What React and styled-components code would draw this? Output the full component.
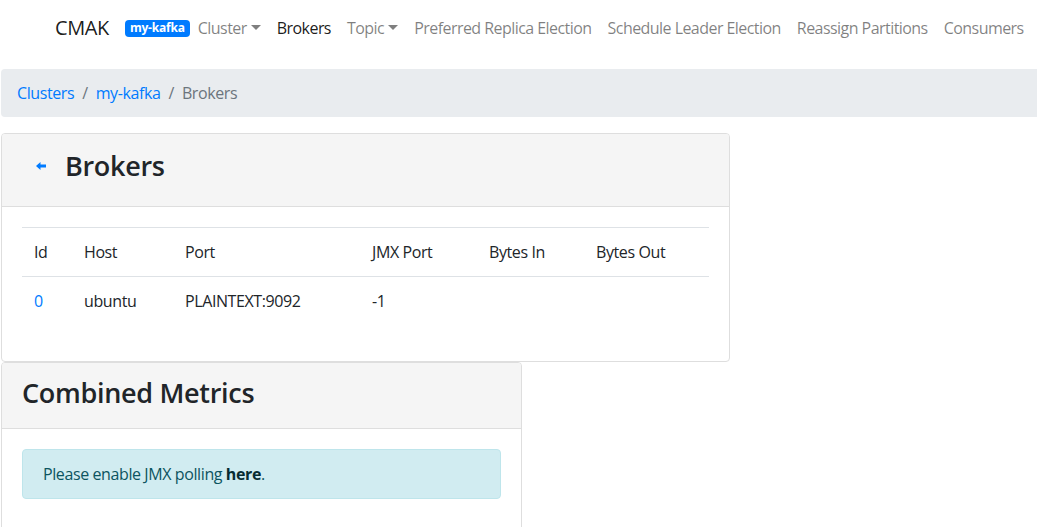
import React from "react";
import styled, { createGlobalStyle } from "styled-components";

const Global = createGlobalStyle`
  html, body { margin: 0; padding: 0; background: #fff; }
  body {
    font-family: "Open Sans", "Noto Sans", sans-serif;
    font-size: 16px;
    line-height: 1.5;
    letter-spacing: -0.4px;
    color: #212529;
  }
  * { box-sizing: border-box; }
`;

const Navbar = styled.nav`
  display: flex;
  align-items: center;
  height: 56px;
  padding: 0 0 0 55px;
  white-space: nowrap;
`;

const Brand = styled.a`
  font-size: 20px;
  line-height: 30px;
  color: rgba(0, 0, 0, 0.9);
  margin-right: 16px;
  text-decoration: none;
`;

const Badge = styled.span`
  display: inline-block;
  background: #007bff;
  color: #fff;
  font-size: 12px;
  font-weight: 700;
  line-height: 1;
  letter-spacing: -0.2px;
  padding: 2px 5px 3px;
  border-radius: 4px;
`;

const NavList = styled.ul`
  display: flex;
  list-style: none;
  margin: 0;
  padding: 0;
`;

const NavLink = styled.a`
  display: flex;
  align-items: center;
  padding: 8px 8px;
  letter-spacing: -0.55px;
  color: ${(p) => (p.$active ? "rgba(0,0,0,0.9)" : "rgba(0,0,0,0.5)")};
  text-decoration: none;
`;

const Caret = styled.span`
  display: inline-block;
  margin-left: 4px;
  border-top: 5px solid currentColor;
  border-left: 5px solid transparent;
  border-right: 5px solid transparent;
  transform: translateY(-1px);
`;

const Main = styled.main`
  padding: 13px 0 0 1px;
`;

const Breadcrumb = styled.ol`
  display: flex;
  list-style: none;
  margin: 0 0 16px;
  padding: 12px 16px;
  background: #e9ecef;
  border-radius: 4px 0 0 4px;
`;

const Crumb = styled.li`
  color: #6c757d;
  & + &::before {
    content: "/";
    padding: 0 8px;
    color: #6c757d;
  }
`;

const CrumbLink = styled.a`
  color: #007bff;
  text-decoration: none;
`;

const Card = styled.section`
  width: ${(p) => p.$width}px;
  border: 1px solid #dedede;
  border-radius: 4px;
  background: #fff;
  overflow: hidden;
`;

const CardHeader = styled.header`
  display: flex;
  align-items: flex-start;
  height: ${(p) => p.$height}px;
  padding: ${(p) => p.$top}px 20px 0;
  background: #f5f5f5;
  border-bottom: 1px solid #dedede;
`;

const Title = styled.h3`
  margin: 0;
  font-size: 27px;
  font-weight: 600;
  line-height: 32px;
  letter-spacing: -0.3px;
  color: #212529;
`;

const BackLink = styled.a`
  display: inline-flex;
  align-items: center;
  height: 32px;
  color: #007bff;
  padding: 0 19px 0 14px;
`;

const CardBody = styled.div`
  padding: 20px;
`;

const Table = styled.table`
  width: 100%;
  border-collapse: collapse;
  margin-bottom: 16px;
`;

const Th = styled.th`
  text-align: left;
  font-weight: 400;
  padding: 12px;
  border-top: 1px solid #dee2e6;
  border-bottom: 1px solid #dee2e6;
  width: ${(p) => p.$w}px;
`;

const Td = styled.td`
  padding: 12px;
  text-align: left;
`;

const IdLink = styled.a`
  color: #007bff;
  text-decoration: none;
`;

const Alert = styled.div`
  padding: 12px 20px;
  margin-bottom: 16px;
  background: #d1ecf1;
  border: 1px solid #bee5eb;
  border-radius: 4px;
  color: #0c5460;
`;

const AlertLink = styled.a`
  font-weight: 700;
  color: #062c33;
  text-decoration: none;
`;

const cols = [
  ["Id", 50],
  ["Host", 101],
  ["Port", 187],
  ["JMX Port", 117],
  ["Bytes In", 107],
  ["Bytes Out", 125],
];

const ArrowLeft = () => (
  <svg width="10" height="8" viewBox="0 0 10 8" aria-hidden="true">
    <path d="M0 4 L4.5 0 V2.5 H10 V5.5 H4.5 V8 Z" fill="currentColor" />
  </svg>
);

export default function App() {
  return (
    <>
      <Global />
      <Navbar>
        <Brand href="#">CMAK</Brand>
        <Badge>my-kafka</Badge>
        <NavList>
          <li>
            <NavLink href="#">
              Cluster <Caret />
            </NavLink>
          </li>
          <li>
            <NavLink href="#" $active>
              Brokers
            </NavLink>
          </li>
          <li>
            <NavLink href="#">
              Topic <Caret />
            </NavLink>
          </li>
          <li>
            <NavLink href="#">Preferred Replica Election</NavLink>
          </li>
          <li>
            <NavLink href="#">Schedule Leader Election</NavLink>
          </li>
          <li>
            <NavLink href="#">Reassign Partitions</NavLink>
          </li>
          <li>
            <NavLink href="#">Consumers</NavLink>
          </li>
        </NavList>
      </Navbar>
      <Main>
        <Breadcrumb>
          <Crumb>
            <CrumbLink href="#">Clusters</CrumbLink>
          </Crumb>
          <Crumb>
            <CrumbLink href="#">my-kafka</CrumbLink>
          </Crumb>
          <Crumb>Brokers</Crumb>
        </Breadcrumb>
        <Card $width={729}>
          <CardHeader $height={73} $top={16}>
            <BackLink href="#">
              <ArrowLeft />
            </BackLink>
            <Title>Brokers</Title>
          </CardHeader>
          <CardBody>
            <Table>
              <thead>
                <tr>
                  {cols.map(([c, w]) => (
                    <Th key={c} $w={w}>
                      {c}
                    </Th>
                  ))}
                </tr>
              </thead>
              <tbody>
                <tr>
                  <Td>
                    <IdLink href="#">0</IdLink>
                  </Td>
                  <Td>ubuntu</Td>
                  <Td>PLAINTEXT:9092</Td>
                  <Td>-1</Td>
                  <Td></Td>
                  <Td></Td>
                </tr>
              </tbody>
            </Table>
          </CardBody>
        </Card>
        <Card $width={521}>
          <CardHeader $height={66} $top={14}>
            <Title>Combined Metrics</Title>
          </CardHeader>
          <CardBody>
            <Alert>
              Please enable JMX polling <AlertLink href="#">here</AlertLink>.
            </Alert>
          </CardBody>
        </Card>
      </Main>
    </>
  );
}
